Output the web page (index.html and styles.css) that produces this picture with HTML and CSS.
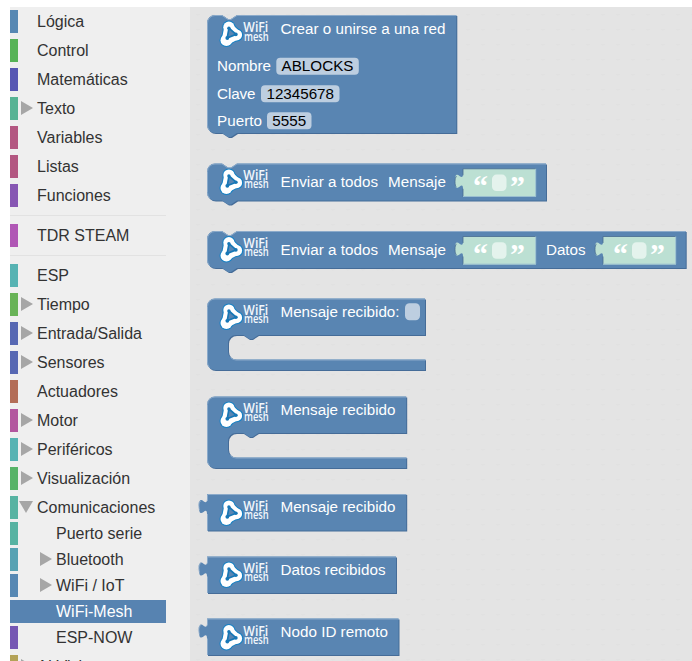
FILE: index.html
```html
<!DOCTYPE html>
<html lang="es">
<head>
<meta charset="utf-8">
<title>Bloques</title>
<link rel="stylesheet" href="styles.css">
</head>
<body>
<div class="editor">
<nav class="toolbox">
  <div class="row logic"><span class="arrow"></span>Lógica</div>
  <div class="row control"><span class="arrow"></span>Control</div>
  <div class="row math"><span class="arrow"></span>Matemáticas</div>
  <div class="row text"><span class="arrow closed"></span>Texto</div>
  <div class="row vars"><span class="arrow"></span>Variables</div>
  <div class="row vars"><span class="arrow"></span>Listas</div>
  <div class="row funcs"><span class="arrow"></span>Funciones</div>
  <div class="separator"></div>
  <div class="row steam"><span class="arrow"></span>TDR STEAM</div>
  <div class="separator"></div>
  <div class="row esp"><span class="arrow"></span>ESP</div>
  <div class="row time"><span class="arrow closed"></span>Tiempo</div>
  <div class="row io"><span class="arrow closed"></span>Entrada/Salida</div>
  <div class="row io"><span class="arrow closed"></span>Sensores</div>
  <div class="row actuators"><span class="arrow"></span>Actuadores</div>
  <div class="row motor"><span class="arrow closed"></span>Motor</div>
  <div class="row esp"><span class="arrow closed"></span>Periféricos</div>
  <div class="row display"><span class="arrow closed"></span>Visualización</div>
  <div class="row comms"><span class="arrow open"></span>Comunicaciones</div>
  <div class="children">
    <div class="row comms"><span class="arrow"></span>Puerto serie</div>
    <div class="row bluetooth"><span class="arrow closed"></span>Bluetooth</div>
    <div class="row wifi"><span class="arrow closed"></span>WiFi / IoT</div>
    <div class="row selected"><span class="arrow"></span>WiFi-Mesh</div>
    <div class="row espnow"><span class="arrow"></span>ESP-NOW</div>
  </div>
  <div class="row vision"><span class="arrow closed"></span>AI Vision</div>
</nav>
<main class="flyout">
<svg width="502" height="654" viewBox="190 7 502 654">
  <defs>
    <pattern id="grid" x="556" y="299" width="15" height="15" patternUnits="userSpaceOnUse"><path d="M0 0.500 H4 M2 0 V2" class="dot"/></pattern>
    <g id="mesh">
      <path d="M9.800 10 L17.800 17.700 L7.200 23.200 Z" class="halo"/>
      <g class="halo-node"><circle cx="9.900" cy="10" r="6.600"/><circle cx="17.800" cy="17.700" r="6.500"/><circle cx="7.400" cy="23" r="6.900"/></g>
      <path d="M9.800 10 L17.800 17.700 L7.200 23.200 Z" class="ring"/>
      <g class="node"><circle cx="9.900" cy="10" r="5.600"/><circle cx="17.600" cy="17.700" r="5.500"/><circle cx="7.400" cy="23" r="5.900"/></g>
      <path d="M10 11 L17 17.200 L8.200 20.800 Z" class="links"/>
      <g class="hub"><circle cx="9.900" cy="11" r="1.700"/><circle cx="16.900" cy="17.200" r="1.800"/><circle cx="8.300" cy="20.800" r="1.900"/></g>
      <text class="wifi-label" x="24.300" y="15.200" textLength="25" lengthAdjust="spacingAndGlyphs">WiFi</text>
      <text class="mesh-label" x="25" y="23.400" textLength="24.800" lengthAdjust="spacingAndGlyphs">mesh</text>
    </g>
    <g id="quoted">
      <path class="value" d="M0 0 H73 V28 H0 V20 c0 -10 -8 8 -8 -7.500 s8 2.500 8 -7.500 Z"/>
      <path class="value-shade" d="M0 28 V20 M-6.500 18.500 C-8.500 17 -8.500 9 -6.500 7.300 M0 6.500 V0 H73"/>
      <path class="value-light" d="M72.700 0 V27.700 H0"/>
      <g class="quote"><text x="10" y="27.300">“</text><text x="47" y="27.300">”</text></g>
      <rect class="blank" x="29" y="5.800" width="14.500" height="16.500" rx="4.500"/>
    </g>
  </defs>
  <rect x="190" y="7" width="502" height="654" fill="url(#grid)"/>

  <g class="block">
    <path class="dark" d="M208 24 a8 8 0 0 1 8 -8 H223 l6 4 3 0 6 -4 H457.300 V134 H238 l-6 4 -3 0 -6 -4 H216 a8 8 0 0 1 -8 -8 Z"/>
    <path class="body" d="M207 23 a8 8 0 0 1 8 -8 H222 l6 4 3 0 6 -4 H456.300 V133 H237 l-6 4 -3 0 -6 -4 H215 a8 8 0 0 1 -8 -8 Z"/>
    <path class="light" d="M209.500 130.500 a8 8 0 0 1 -2 -5.500 V23 a7.500 7.500 0 0 1 7.500 -7.500 H222 l6 4 3 0 6 -4 H456.300"/>
    <use href="#mesh" x="219" y="17.200"/>
    <text x="280.500" y="34" textLength="165">Crear o unirse a una red</text>
    <text x="217" y="71" textLength="54">Nombre</text>
    <rect class="field" x="276.300" y="57.800" width="82.500" height="17" rx="4"/>
    <text class="input" x="281.500" y="71" textLength="72">ABLOCKS</text>
    <text x="217" y="98.500" textLength="38.500">Clave</text>
    <rect class="field" x="261" y="85.200" width="78.500" height="17" rx="4"/>
    <text class="input" x="266.500" y="98.500" textLength="67.500">12345678</text>
    <text x="217" y="126" textLength="45">Puerto</text>
    <rect class="field" x="267" y="112.200" width="44.500" height="17" rx="4"/>
    <text class="input" x="272.300" y="125.800" textLength="34">5555</text>
  </g>

  <g class="block">
    <path class="dark" d="M208 172.500 a8 8 0 0 1 8 -8 H223 l6 4 3 0 6 -4 H547 V201.500 H238 l-6 4 -3 0 -6 -4 H216 a8 8 0 0 1 -8 -8 Z"/>
    <path class="body" d="M207 171.500 a8 8 0 0 1 8 -8 H222 l6 4 3 0 6 -4 H546 V200.500 H237 l-6 4 -3 0 -6 -4 H215 a8 8 0 0 1 -8 -8 Z"/>
    <path class="light" d="M209.500 198 a8 8 0 0 1 -2 -5.500 V171.500 a7.500 7.500 0 0 1 7.500 -7.500 H222 l6 4 3 0 6 -4 H546"/>
    <use href="#mesh" x="219" y="165"/>
    <text x="280.500" y="187" textLength="97.500">Enviar a todos</text>
    <text x="388" y="187" textLength="58">Mensaje</text>
    <use href="#quoted" x="463" y="168.800"/>
  </g>

  <g class="block">
    <path class="dark" d="M208 240 a8 8 0 0 1 8 -8 H223 l6 4 3 0 6 -4 H686.700 V269 H238 l-6 4 -3 0 -6 -4 H216 a8 8 0 0 1 -8 -8 Z"/>
    <path class="body" d="M207 239 a8 8 0 0 1 8 -8 H222 l6 4 3 0 6 -4 H685.700 V268 H237 l-6 4 -3 0 -6 -4 H215 a8 8 0 0 1 -8 -8 Z"/>
    <path class="light" d="M209.500 265.500 a8 8 0 0 1 -2 -5.500 V239 a7.500 7.500 0 0 1 7.500 -7.500 H222 l6 4 3 0 6 -4 H685.700"/>
    <use href="#mesh" x="219" y="232.700"/>
    <text x="280.500" y="255" textLength="97.500">Enviar a todos</text>
    <text x="388" y="255" textLength="58">Mensaje</text>
    <use href="#quoted" x="463" y="236.500"/>
    <text x="546" y="255" textLength="39.500">Datos</text>
    <use href="#quoted" x="603" y="236.500"/>
  </g>

  <g class="block">
    <path class="dark" d="M208 307.500 a8 8 0 0 1 8 -8 H426 V336 H259 l-6 4 -3 0 -6 -4 H237 a8 8 0 0 0 -8 8 V352 a8 8 0 0 0 8 8 H426 V371 H216 a8 8 0 0 1 -8 -8 Z"/>
    <path class="body" d="M207 306.500 a8 8 0 0 1 8 -8 H425 V335 H258.500 l-6 4 -3 0 -6 -4 H236 a8 8 0 0 0 -8 8 V351.500 a8 8 0 0 0 8 8 H425 V370 H215 a8 8 0 0 1 -8 -8 Z"/>
    <path class="light" d="M209.500 367.500 a8 8 0 0 1 -2 -5.500 V306.500 a7.500 7.500 0 0 1 7.500 -7.500 H425 M230.500 357.500 a8 8 0 0 0 5.500 2.500 H426"/>
    <use href="#mesh" x="219" y="300"/>
    <text x="280.500" y="317" textLength="119">Mensaje recibido:</text>
    <rect class="field" x="405" y="303.300" width="15" height="17" rx="4.500"/>
  </g>

  <g class="block">
    <path class="dark" d="M208 405.500 a8 8 0 0 1 8 -8 H407.200 V434 H259 l-6 4 -3 0 -6 -4 H237 a8 8 0 0 0 -8 8 V450 a8 8 0 0 0 8 8 H407.200 V469 H216 a8 8 0 0 1 -8 -8 Z"/>
    <path class="body" d="M207 404.500 a8 8 0 0 1 8 -8 H406.200 V433 H258.500 l-6 4 -3 0 -6 -4 H236 a8 8 0 0 0 -8 8 V449.500 a8 8 0 0 0 8 8 H406.200 V468 H215 a8 8 0 0 1 -8 -8 Z"/>
    <path class="light" d="M209.500 465.500 a8 8 0 0 1 -2 -5.500 V404.500 a7.500 7.500 0 0 1 7.500 -7.500 H406.200 M230.500 455.500 a8 8 0 0 0 5.500 2.500 H407"/>
    <use href="#mesh" x="219" y="398"/>
    <text x="280.500" y="415" textLength="115">Mensaje recibido</text>
  </g>

  <g class="block">
    <path class="dark" d="M208 495 H407.200 V531.500 H208 Z"/>
    <path class="body" d="M207 494 H406.200 V530.500 H207 V514 c0 -10 -8 8 -8 -7.500 s8 2.500 8 -7.500 Z"/>
    <path class="light" d="M207.500 530.500 V514 M199.500 510 C198.500 505 198.500 501 201 501.200 M207.500 501 V494.500 H406.200"/>
    <use href="#mesh" x="219" y="496"/>
    <text x="280.500" y="512" textLength="115">Mensaje recibido</text>
  </g>

  <g class="block">
    <path class="dark" d="M208 557.500 H397 V594 H208 Z"/>
    <path class="body" d="M207 556.500 H396 V593 H207 V576.500 c0 -10 -8 8 -8 -7.500 s8 2.500 8 -7.500 Z"/>
    <path class="light" d="M207.500 593 V576.500 M199.500 572.500 C198.500 567.500 198.500 563.500 201 563.700 M207.500 563.500 V557 H396"/>
    <use href="#mesh" x="219" y="558"/>
    <text x="280.500" y="575" textLength="105">Datos recibidos</text>
  </g>

  <g class="block">
    <path class="dark" d="M208 619.500 H399.500 V656 H208 Z"/>
    <path class="body" d="M207 618.500 H398.500 V655 H207 V638.500 c0 -10 -8 8 -8 -7.500 s8 2.500 8 -7.500 Z"/>
    <path class="light" d="M207.500 655 V638.500 M199.500 634.500 C198.500 629.500 198.500 625.500 201 625.700 M207.500 625.500 V619 H398.500"/>
    <use href="#mesh" x="219" y="620.700"/>
    <text x="280.500" y="637" textLength="107.500">Nodo ID remoto</text>
  </g>
</svg>
</main>
</div>
</body>
</html>
```
FILE: styles.css
```css
body {
  margin: 0;
  background: #fff;
  font-family: "Liberation Sans", Arial, sans-serif;
  overflow: hidden;
}
.editor {
  display: flex;
  height: 654px;
  margin: 7px 0 0 10px;
  overflow: hidden;
}
.toolbox {
  box-sizing: border-box;
  flex: 0 0 180px;
  padding: 3px 24px 0 0;
  background: #efefef;
  color: #333;
}
.row {
  --c: #5b80a5;
  box-sizing: border-box;
  display: flex;
  align-items: center;
  height: 23px;
  margin-bottom: 6px;
  border-left: 8px solid var(--c);
  font-size: 16px;
  line-height: 23px;
  white-space: nowrap;
}
.arrow {
  display: flex;
  flex: 0 0 19px;
  align-items: center;
  height: 22px;
  margin-bottom: 1px;
}
.arrow.closed::before {
  content: "";
  margin-left: 3px;
  border: solid transparent;
  border-width: 7px 0 7px 12px;
  border-left-color: #a6a6a6;
}
.arrow.open::before {
  content: "";
  margin: 0 0 0 1px;
  border: solid transparent;
  border-width: 12px 7px 0;
  border-top-color: #a6a6a6;
}
.separator {
  height: 4px;
  margin: -2px 0 8px;
  border-bottom: 1px solid #e2e2e2;
}
.children { margin-top: -3px; padding-bottom: 3px; }
.children .row { margin-bottom: 3px; }
.children .arrow { flex-basis: 38px; }
.children .closed::before { margin-left: 22px; }
.row.selected { background: #5783b1; color: #fff; }

.logic, .wifi { --c: #5788b3; }
.control { --c: #57b357; }
.math { --c: #5757b3; }
.text { --c: #57b394; }
.vars { --c: #b35781; }
.funcs { --c: #8757b3; }
.steam { --c: #b057b5; }
.esp { --c: #57b3b3; }
.time { --c: #68b357; }
.io { --c: #5768b3; }
.actuators { --c: #b36d57; }
.motor { --c: #b3579f; }
.display { --c: #57b368; }
.comms { --c: #57b3a2; }
.bluetooth { --c: #57a2b3; }
.selected { --c: #5783b1; }
.espnow { --c: #7657b3; }
.vision { --c: #b3a257; }

.flyout { flex: 0 0 502px; background: #e4e4e4; }
.flyout svg { display: block; }
.dot { fill: none; stroke: #e1e1e1; }
.body { fill: #5985b2; }
.dark { fill: #456c98; }
.light { fill: none; stroke: #8baaca; stroke-width: 1; }
.block text { fill: #fff; font-size: 15.2px; }
.block .input { fill: #000; }
.field { fill: #bdcee0; }
.value { fill: #bce0d3; }
.value-shade { fill: none; stroke: #466b91; stroke-width: 0.8; }
.value-light { fill: none; stroke: #9abfd0; }
#quoted .quote text { font: bold 30px "Liberation Serif", serif; fill: #fff; }
.blank { fill: #e4f3ed; }
#mesh .wifi-label { font: 600 13.5px "Open Sans", sans-serif; fill: #f2f7fc; }
#mesh .mesh-label { font: 600 12.5px "Open Sans", sans-serif; fill: #f2f7fc; }
.hub { fill: #1777b6; }
.halo-node { fill: #1681c4; }
.node { fill: #fff; }
.halo, .ring, .links { fill: none; stroke-linejoin: round; }
.halo { stroke: #1681c4; stroke-width: 11; }
.ring { stroke: #fff; stroke-width: 9; fill: #fff; }
.links { stroke: #1777b6; stroke-width: 1.7; fill: #5985b2; }
```
